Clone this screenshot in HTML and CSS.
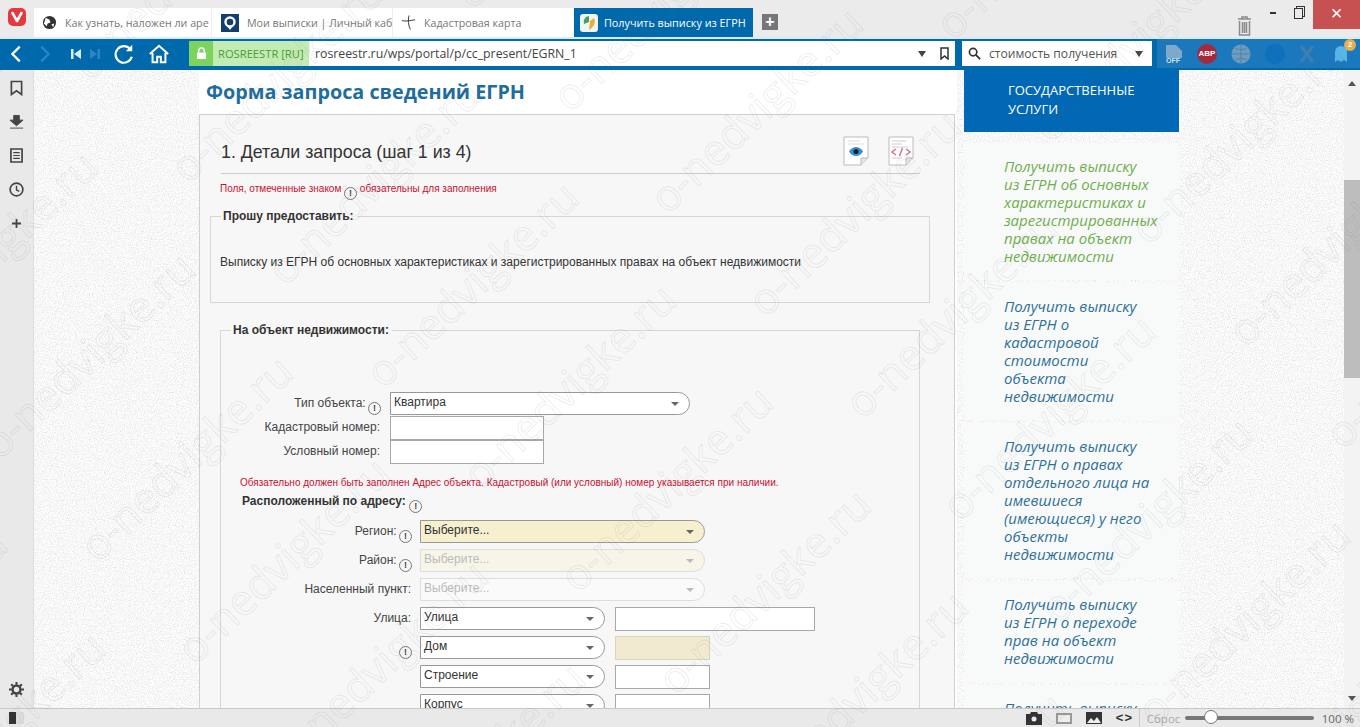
FILE: index.html
```html
<!DOCTYPE html>
<html lang="ru">
<head>
<meta charset="utf-8">
<title>Получить выписку из ЕГРН</title>
<link rel="stylesheet" href="styles.css">
</head>
<body>
<header class="tabbar">
  <div class="logo"><svg viewBox="0 0 18 18" width="18" height="18"><rect width="18" height="18" rx="5" fill="#e5383f"/><path d="M4.5 5l4.5 8 4.5-8" fill="none" stroke="#fff" stroke-width="2.6" stroke-linecap="round" stroke-linejoin="round"/></svg></div>
  <div class="tab tab-one"><svg viewBox="0 0 16 16" width="15" height="15"><circle cx="8" cy="8" r="7" fill="#333"/><path d="M4 3l4 2 1 3-3 1-1 3-3-3zM10 10l3-1-1 4z" fill="#fff"/></svg><span class="tab-text">Как узнать, наложен ли аре</span></div>
  <div class="tab tab-two"><svg viewBox="0 0 18 18" width="18" height="18"><rect width="18" height="18" fill="#123f6d"/><circle cx="9" cy="8" r="4.5" fill="none" stroke="#fff" stroke-width="2.4"/><path d="M6 12l3 4 3-4z" fill="#fff"/></svg><span class="tab-text">Мои выписки | Личный каб</span></div>
  <div class="tab tab-three"><svg viewBox="0 0 16 18" width="15" height="18"><path d="M1 6.500c4 1 9 0 14-1M8.500 1c-1 5-1 10 1.500 15" fill="none" stroke="#333" stroke-width="1"/></svg><span class="tab-text">Кадастровая карта</span></div>
  <div class="tab tab-active"><svg viewBox="0 0 18 18" width="18" height="18"><rect width="18" height="18" rx="3" fill="#eef5f2"/><path d="M9 2a6 6 0 0 0-5 8l5-2z" fill="#4a9d5b"/><path d="M10 7l4-3c2 4 0 9-5 12z" fill="#e4b23a"/></svg><span>Получить выписку из ЕГРН</span></div>
  <div class="new-tab">+</div>
  <div class="window-tools">
    <svg class="trash" viewBox="0 0 15 22" width="15" height="22"><path d="M1 4h13M5 4V2h5v2M2.500 6v14h10V6M5.500 7v11M7.500 7v11M9.500 7v11" fill="none" stroke="#8a8a8a" stroke-width="1.500"/></svg>
    <span class="win-min"></span>
    <span class="win-max"></span>
    <span class="win-close">×</span>
  </div>
</header>

<nav class="addressbar">
  <div class="nav-icons">
    <svg viewBox="0 0 24 24" width="22" height="24"><path d="M15 4l-8 8 8 8" fill="none" stroke="#fff" stroke-width="2.500"/></svg>
    <svg viewBox="0 0 24 24" width="22" height="24"><path d="M9 4l8 8-8 8" fill="none" stroke="#2b86c8" stroke-width="2.500"/></svg>
    <svg class="skip" viewBox="0 0 14 14" width="14" height="14"><path d="M2 2h2.500v10H2zM12 2v10L5 7z" fill="#dcecf7"/></svg>
    <svg viewBox="0 0 14 14" width="14" height="14"><path d="M12 2h-2.500v10H12zM2 2v10l7-5z" fill="#2b86c8"/></svg>
    <svg class="reload" viewBox="0 0 24 24" width="22" height="22"><path d="M19 7A9 9 0 1 0 20.500 15" fill="none" stroke="#fff" stroke-width="2.400"/><path d="M21 2v7h-7z" fill="#fff"/></svg>
    <svg viewBox="0 0 24 24" width="22" height="22"><path d="M2 12L12 3l10 9M5 11v10h5v-6h4v6h5V11" fill="none" stroke="#fff" stroke-width="2.200"/></svg>
  </div>
  <div class="urlfield">
    <div class="site-badge"><span class="lock"><svg viewBox="0 0 12 14" width="11" height="13"><path d="M3 6V4a3 3 0 0 1 6 0v2" fill="none" stroke="#fff" stroke-width="1.500"/><rect x="1" y="6" width="10" height="7" fill="#fff"/></svg></span><span>ROSREESTR [RU]</span></div>
    <span class="url">rosreestr.ru/wps/portal/p/cc_present/EGRN_1</span>
    <span class="arrow-down"></span>
    <svg class="mark" viewBox="0 0 9 13" width="9" height="13"><path d="M1 1h7v11L4.500 9 1 12z" fill="none" stroke="#333" stroke-width="1.500"/></svg>
  </div>
  <div class="searchfield">
    <svg viewBox="0 0 14 14" width="13" height="13"><circle cx="5.500" cy="5.500" r="4" fill="none" stroke="#333" stroke-width="1.800"/><path d="M8.500 8.500L13 13" stroke="#333" stroke-width="2"/></svg>
    <span class="query">стоимость получения</span>
    <span class="arrow-down"></span>
  </div>
  <div class="ext-icons">
    <svg viewBox="0 0 18 20" width="18" height="20"><path d="M1 1h10l6 6v7H1z" fill="#7fa9c9"/><text x="1" y="19" class="ext-off">OFF</text></svg>
    <span class="abp">ABP</span>
    <svg viewBox="0 0 20 20" width="20" height="20"><circle cx="10" cy="10" r="9.500" fill="#6f9cbc"/><path d="M1 10h18M10 1v18M4 4c4 2 8 2 12 0M4 16c4-2 8-2 12 0" stroke="#4b83ab" fill="none"/></svg>
    <span class="ext-blue"></span>
    <svg viewBox="0 0 16 18" width="16" height="18"><path d="M2 1l12 16M14 1L2 17" stroke="#3f7fb0" stroke-width="3"/></svg>
    <span class="ghost"><svg viewBox="0 0 14 18" width="14" height="18"><path d="M1 17V7a6 6 0 0 1 12 0v10l-3-2-3 2-3-2z" fill="#58b6e6"/></svg><b class="ghost-badge">2</b></span>
  </div>
</nav>

<div class="workspace">
  <aside class="sidepanel">
    <svg viewBox="0 0 14 16" width="13" height="16"><path d="M1.500 1h11v14L7 11l-5.500 4z" fill="none" stroke="#444" stroke-width="1.800"/></svg>
    <svg viewBox="0 0 16 16" width="15" height="16"><path d="M5 1h6v5h4l-7 6-7-6h4zM1 14.500h14" fill="#444" stroke="#444"/></svg>
    <svg viewBox="0 0 14 16" width="13" height="15"><path d="M1 1h12v14H1z" fill="none" stroke="#444" stroke-width="1.800"/><path d="M3.500 5h7M3.500 8h7M3.500 11h7" stroke="#444" stroke-width="1.300"/></svg>
    <svg class="clock" viewBox="0 0 16 16" width="15" height="15"><circle cx="8" cy="8" r="6.800" fill="none" stroke="#444" stroke-width="1.800"/><path d="M8 4v4.500l3 1.500" fill="none" stroke="#444" stroke-width="1.500"/></svg>
    <svg class="plus" viewBox="0 0 10 10" width="9" height="9"><path d="M5 0v10M0 5h10" stroke="#444" stroke-width="2"/></svg>
    <svg class="gear" viewBox="0 0 16 16" width="15" height="15"><circle cx="8" cy="8" r="4.200" fill="none" stroke="#444" stroke-width="2.600"/><path d="M8 0v3M8 13v3M0 8h3M13 8h3M2.300 2.300l2.200 2.200M11.500 11.500l2.200 2.200M13.700 2.300l-2.200 2.200M4.500 11.500l-2.200 2.200" stroke="#444" stroke-width="2.200"/></svg>
  </aside>

  <main class="page">
    <svg class="speckle" aria-hidden="true"><filter id="grain"><feTurbulence type="fractalNoise" baseFrequency="0.85" numOctaves="2"/><feColorMatrix values="0 0 0 0 0.6  0 0 0 0 0.6  0 0 0 0 0.6  1.300 0 0 0 -0.55"/></filter><rect width="100%" height="100%" filter="url(#grain)"/></svg>
    <div class="column">
      <h1 class="heading">Форма запроса сведений ЕГРН</h1>
      <section class="panel">
        <div class="step-head">
          <h2>1. Детали запроса (шаг 1 из 4)</h2>
          <div class="doc-icons">
            <svg viewBox="0 0 26 30" width="26" height="30"><path d="M1 1h24v21l-7 7H1z" fill="#fff" stroke="#bbb"/><path d="M18 29v-7h7" fill="#e6e6e6" stroke="#bbb"/><path d="M5 5h12M5 8h16" stroke="#ddd"/><path d="M6 15.500c3.500-6 10.500-6 14 0-3.500 6-10.500 6-14 0z" fill="#3d8dcb"/><circle cx="13" cy="15.500" r="2.500" fill="#123"/></svg>
            <svg viewBox="0 0 26 30" width="26" height="30"><path d="M1 1h24v21l-7 7H1z" fill="#fff" stroke="#bbb"/><path d="M18 29v-7h7" fill="#e6e6e6" stroke="#bbb"/><path d="M4 5h14M4 8h10M4 11h16M4 22h10" stroke="#ccc"/><path d="M8 13l-4 3 4 3M18 13l4 3-4 3M14.500 12l-3 8" fill="none" stroke="#c77a8c" stroke-width="1.500"/></svg>
          </div>
        </div>
        <p class="note note-top">Поля, отмеченные знаком <i class="req">!</i> обязательны для заполнения</p>
        <fieldset class="box box-request">
          <legend>Прошу предоставить:</legend>
          <p class="request-text">Выписку из ЕГРН об основных характеристиках и зарегистрированных правах на объект недвижимости</p>
        </fieldset>
        <fieldset class="box box-object">
          <legend>На объект недвижимости:</legend>
          <div class="rows rows-object">
            <div class="row"><label class="lbl">Тип объекта: <i class="req">!</i></label><div class="select w300">Квартира</div></div>
            <div class="row"><label class="lbl">Кадастровый номер:</label><div class="input w154"></div></div>
            <div class="row"><label class="lbl">Условный номер:</label><div class="input w154"></div></div>
          </div>
          <p class="note note-address">Обязательно должен быть заполнен Адрес объекта. Кадастровый (или условный) номер указывается при наличии.</p>
          <h3 class="addr-title">Расположенный по адресу: <i class="req">!</i></h3>
          <div class="rows rows-address">
            <div class="row"><label class="lbl">Регион: <i class="req">!</i></label><div class="select w285 yellow">Выберите...</div></div>
            <div class="row"><label class="lbl">Район: <i class="req">!</i></label><div class="select w285 yellow off">Выберите...</div></div>
            <div class="row"><label class="lbl">Населенный пункт:</label><div class="select w285 off">Выберите...</div></div>
            <div class="row"><label class="lbl">Улица:</label><div class="select w185">Улица</div><div class="input w200"></div></div>
            <div class="row"><label class="lbl"><i class="req">!</i></label><div class="select w185">Дом</div><div class="input w95 beige"></div></div>
            <div class="row"><label class="lbl"></label><div class="select w185">Строение</div><div class="input w95"></div></div>
            <div class="row"><label class="lbl"></label><div class="select w185">Корпус</div><div class="input w95"></div></div>
          </div>
        </fieldset>
      </section>
    </div>
    <aside class="services">
      <div class="services-title">ГОСУДАРСТВЕННЫЕ<br>УСЛУГИ</div>
      <ul class="service-list">
        <li class="current">Получить выписку<br>из ЕГРН об основных<br>характеристиках и<br>зарегистрированных<br>правах на объект<br>недвижимости</li>
        <li>Получить выписку<br>из ЕГРН о<br>кадастровой<br>стоимости<br>объекта<br>недвижимости</li>
        <li>Получить выписку<br>из ЕГРН о правах<br>отдельного лица на<br>имевшиеся<br>(имеющиеся) у него<br>объекты<br>недвижимости</li>
        <li>Получить выписку<br>из ЕГРН о переходе<br>прав на объект<br>недвижимости</li>
        <li>Получить выписку</li>
      </ul>
    </aside>
    <div class="scrollbar"><span class="sb-up"></span><span class="sb-thumb"></span><span class="sb-down"></span></div>
  </main>
</div>

<footer class="statusbar">
  <span class="panel-toggle"></span>
  <div class="status-right">
    <svg viewBox="0 0 16 13" width="16" height="13"><path d="M0 2h4l1-2h6l1 2h4v11H0z" fill="#333"/><circle cx="8" cy="7" r="2.500" fill="#eee"/></svg>
    <span class="status-rect"></span>
    <svg viewBox="0 0 16 12" width="16" height="12"><path d="M0 0h16v12H0z" fill="#333"/><path d="M1 11l4-5 3 3 3-4 4 6z" fill="#eee"/></svg>
    <span class="status-code">&lt;&#8202;&gt;</span>
    <span class="status-sep"></span>
    <span class="reset">Сброс</span>
    <span class="slider"><span class="slider-knob"></span></span>
    <span class="zoom">100 %</span>
  </div>
</footer>

<div class="watermark" aria-hidden="true">
  <div class="wm-plane">
    <div class="wm-row"><span>o-nedvigke.ru</span><span>o-nedvigke.ru</span><span>o-nedvigke.ru</span><span>o-nedvigke.ru</span></div>
    <div class="wm-row odd"><span>o-nedvigke.ru</span><span>o-nedvigke.ru</span><span>o-nedvigke.ru</span><span>o-nedvigke.ru</span></div>
    <div class="wm-row"><span>o-nedvigke.ru</span><span>o-nedvigke.ru</span><span>o-nedvigke.ru</span><span>o-nedvigke.ru</span></div>
    <div class="wm-row odd"><span>o-nedvigke.ru</span><span>o-nedvigke.ru</span><span>o-nedvigke.ru</span><span>o-nedvigke.ru</span></div>
    <div class="wm-row"><span>o-nedvigke.ru</span><span>o-nedvigke.ru</span><span>o-nedvigke.ru</span><span>o-nedvigke.ru</span></div>
    <div class="wm-row odd"><span>o-nedvigke.ru</span><span>o-nedvigke.ru</span><span>o-nedvigke.ru</span><span>o-nedvigke.ru</span></div>
    <div class="wm-row"><span>o-nedvigke.ru</span><span>o-nedvigke.ru</span><span>o-nedvigke.ru</span><span>o-nedvigke.ru</span></div>
    <div class="wm-row odd"><span>o-nedvigke.ru</span><span>o-nedvigke.ru</span><span>o-nedvigke.ru</span><span>o-nedvigke.ru</span></div>
    <div class="wm-row"><span>o-nedvigke.ru</span><span>o-nedvigke.ru</span><span>o-nedvigke.ru</span><span>o-nedvigke.ru</span></div>
    <div class="wm-row odd"><span>o-nedvigke.ru</span><span>o-nedvigke.ru</span><span>o-nedvigke.ru</span><span>o-nedvigke.ru</span></div>
    <div class="wm-row"><span>o-nedvigke.ru</span><span>o-nedvigke.ru</span><span>o-nedvigke.ru</span><span>o-nedvigke.ru</span></div>
    <div class="wm-row odd"><span>o-nedvigke.ru</span><span>o-nedvigke.ru</span><span>o-nedvigke.ru</span><span>o-nedvigke.ru</span></div>
    <div class="wm-row"><span>o-nedvigke.ru</span><span>o-nedvigke.ru</span><span>o-nedvigke.ru</span><span>o-nedvigke.ru</span></div>
    <div class="wm-row odd"><span>o-nedvigke.ru</span><span>o-nedvigke.ru</span><span>o-nedvigke.ru</span><span>o-nedvigke.ru</span></div>
    <div class="wm-row"><span>o-nedvigke.ru</span><span>o-nedvigke.ru</span><span>o-nedvigke.ru</span><span>o-nedvigke.ru</span></div>
    <div class="wm-row odd"><span>o-nedvigke.ru</span><span>o-nedvigke.ru</span><span>o-nedvigke.ru</span><span>o-nedvigke.ru</span></div>
    <div class="wm-row"><span>o-nedvigke.ru</span><span>o-nedvigke.ru</span><span>o-nedvigke.ru</span><span>o-nedvigke.ru</span></div>
    <div class="wm-row odd"><span>o-nedvigke.ru</span><span>o-nedvigke.ru</span><span>o-nedvigke.ru</span><span>o-nedvigke.ru</span></div>
    <div class="wm-row"><span>o-nedvigke.ru</span><span>o-nedvigke.ru</span><span>o-nedvigke.ru</span><span>o-nedvigke.ru</span></div>
    <div class="wm-row odd"><span>o-nedvigke.ru</span><span>o-nedvigke.ru</span><span>o-nedvigke.ru</span><span>o-nedvigke.ru</span></div>
    <div class="wm-row"><span>o-nedvigke.ru</span><span>o-nedvigke.ru</span><span>o-nedvigke.ru</span><span>o-nedvigke.ru</span></div>
    <div class="wm-row odd"><span>o-nedvigke.ru</span><span>o-nedvigke.ru</span><span>o-nedvigke.ru</span><span>o-nedvigke.ru</span></div>
  </div>
</div>
</body>
</html>
```
FILE: styles.css
```css
* { box-sizing: border-box; }
html, body { margin: 0; height: 100%; overflow: hidden; }
body {
  position: relative;
  display: flex;
  flex-direction: column;
  width: 1360px;
  height: 727px;
  font-family: "Liberation Sans", Arial, sans-serif;
  background: #fff;
  color: #333;
}

/* Tab bar */
.tabbar {
  height: 37px;
  flex: none;
  display: flex;
  align-items: flex-end;
  background: #ebebeb;
  font-family: "Open Sans", "Noto Sans", sans-serif;
  font-size: 10.7px;
}
.logo { width: 34px; height: 37px; padding: 8px 0 0 8px; }
.tab {
  height: 29px;
  display: flex;
  align-items: center;
  gap: 8px;
  padding-left: 8px;
  background: #fff;
  color: #777;
  white-space: nowrap;
}
.tab svg { flex: none; }
.tab-text { flex: 1; }
.tab-one { width: 178px; border-right: 1px solid #eee; }
.tab-two { width: 181px; border-right: 1px solid #eee; padding-left: 9px; }
.tab-three { width: 181px; gap: 8px; }
.tab-active { width: 179px; background: #0069ac; color: #fff; padding-left: 6px; gap: 6px; }
.tab-active span { font-size: 10.8px; }
.new-tab {
  width: 16px;
  height: 16px;
  margin: 0 0 7px 9px;
  background: #777;
  color: #fff;
  font: bold 16px/15px "Liberation Sans", sans-serif;
  text-align: center;
}
.window-tools { position: relative; flex: 1; height: 37px; }
.trash { position: absolute; left: 459px; top: 15px; }
.win-min { position: absolute; left: 492px; top: 12px; width: 6px; height: 2px; background: #333; }
.win-max { position: absolute; left: 516px; top: 8px; width: 9px; height: 11px; border: 1px solid #333; background: #ebebeb; box-shadow: 2px -2px 0 -1px #ebebeb, 2px -2px 0 0 #333; }
.win-close { position: absolute; right: 0; top: 0; width: 47px; height: 29px; background: #c75050; color: #fff; font: 20px/26px "Liberation Sans", sans-serif; text-align: center; }

/* Address bar */
.addressbar {
  height: 33px;
  flex: none;
  display: flex;
  align-items: center;
  background: #0069ac;
  border-top: 2px solid #d8ecf7;
  border-bottom: 2px solid #0069ac;
}
.nav-icons { width: 189px; display: flex; align-items: center; padding-left: 6px; gap: 5px; }
.nav-icons .skip { margin-left: 9px; }
.nav-icons .reload { margin-left: 6px; margin-right: 8px; }
.urlfield {
  width: 766px;
  height: 25px;
  display: flex;
  align-items: center;
  background: #fff;
  font-family: "Open Sans", "Noto Sans", sans-serif;
  font-size: 12.3px;
  color: #444;
}
.site-badge {
  width: 120px;
  height: 25px;
  display: flex;
  align-items: center;
  gap: 5px;
  background: #c3ecb4;
  color: #4e9a3a;
  font-size: 11.2px;
  white-space: nowrap;
}
.lock { width: 24px; height: 25px; display: flex; align-items: center; justify-content: center; background: #7ed35f; }
.url { margin-left: 6px; flex: 1; white-space: nowrap; }
.arrow-down { width: 0; height: 0; border: 4px solid transparent; border-top: 6px solid #444; border-bottom: 0; }
.mark { margin: 0 6px 0 14px; }
.searchfield {
  width: 190px;
  height: 25px;
  margin-left: 7px;
  display: flex;
  align-items: center;
  padding: 0 9px 0 6px;
  gap: 3px;
  background: #fff;
  font-family: "Open Sans", "Noto Sans", sans-serif;
  font-size: 12.1px;
  color: #555;
}
.query { flex: 1; white-space: nowrap; margin-left: 5px; }
.ext-icons {
  flex: 1;
  height: 29px;
  margin-left: 5px;
  display: flex;
  align-items: center;
  gap: 14px;
  padding-left: 8px;
  background: #1c78bc;
}
.ext-off { font: bold 7px "Liberation Sans", sans-serif; fill: #cfe2ee; }
.abp {
  width: 20px;
  height: 20px;
  border-radius: 50%;
  background: #a8283c;
  color: #fff;
  font: bold 8px/20px "Liberation Sans", sans-serif;
  text-align: center;
}
.ext-blue { width: 20px; height: 20px; border-radius: 50%; background: #0f70bb; }
.ghost { position: relative; display: flex; margin-left: 5px; }
.ghost-badge {
  position: absolute;
  left: 10px;
  top: -6px;
  width: 12px;
  height: 12px;
  border-radius: 50%;
  background: #e0b050;
  color: #fff;
  font: bold 8px/12px "Liberation Sans", sans-serif;
  text-align: center;
}

/* Workspace */
.workspace { flex: 1; min-height: 0; display: flex; }
.sidepanel {
  position: relative;
  width: 34px;
  flex: none;
  display: flex;
  flex-direction: column;
  align-items: center;
  gap: 18px;
  padding-top: 10px;
  background: #e9e9e9;
  border-right: 1px solid #ddd;
}
.clock { margin-top: 1px; }
.plus { margin-top: 4px; }
.gear { position: absolute; left: 9px; top: 612px; }

.page {
  position: relative;
  flex: 1;
  min-width: 0;
  display: flex;
  gap: 7px;
  padding-left: 165px;
  background: #fdfdfd;
  overflow: hidden;
}
.speckle { position: absolute; inset: 0; width: 100%; height: 100%; }
.column { position: relative; width: 758px; flex: none; background: #fff; }
.heading {
  margin: 0;
  height: 44px;
  padding: 5px 0 0 7px;
  font: 700 19.8px/34px "Open Sans", "Noto Sans", sans-serif;
  color: #1e6d9f;
}
.panel {
  width: 756px;
  height: 640px;
  padding: 21px 24px 0 10px;
  background: #f7f7f7;
  border: 1px solid #cfcfcf;
}
.step-head {
  position: relative;
  height: 38px;
  margin: 0 10px 0 11px;
  padding-top: 4px;
  border-bottom: 1px solid #ccc;
}
.step-head h2 { margin: 0; font-size: 17.8px; font-weight: 400; line-height: 24px; color: #333; }
.doc-icons { position: absolute; right: 6px; top: 0; display: flex; gap: 19px; }
.note { margin: 0; font-size: 10px; color: #c8102e; white-space: nowrap; }
.note-top { margin: 8px 0 0 10px; line-height: 14px; }
.req {
  display: inline-block;
  width: 13px;
  height: 13px;
  border: 1px solid #777;
  border-radius: 50%;
  font: bold 9px/11px "Liberation Sans", sans-serif;
  color: #444;
  text-align: center;
  vertical-align: -4px;
}
.lbl .req { margin-right: -1px; margin-left: -1px; }
.box {
  margin: 0;
  padding: 0;
  border: 1px solid #d6d6d6;
  min-width: 0;
}
.box legend {
  padding: 0 3px 0 2px;
  margin-left: 10px;
  font-size: 12px;
  font-weight: 700;
  line-height: 14px;
  color: #333;
}
.box-request { height: 94px; margin-top: 9px; }
.request-text { margin: 32px 0 0 9px; font-size: 12px; line-height: 14px; color: #333; }
.box-object { margin: 20px 0 0 10px; width: 700px; height: 420px; }
.rows { display: flex; flex-direction: column; }
.row { display: flex; align-items: flex-start; }
.rows-object { margin-top: 55px; }
.rows-object .row { height: 24px; }
.rows-address { gap: 6px; margin-top: 7px; }
.rows-address .row { height: 23px; }
.lbl {
  flex: none;
  font-size: 12px;
  line-height: 23px;
  text-align: right;
  color: #444;
  white-space: nowrap;
}
.rows-object .lbl { width: 159px; margin-right: 10px; }
.rows-address .lbl { width: 190px; margin-right: 9px; }
.select {
  position: relative;
  height: 23px;
  padding-left: 3px;
  border: 1px solid #999;
  border-radius: 0 12px 12px 0;
  background: #fff;
  font-size: 12px;
  line-height: 19px;
  color: #333;
}
.select::after {
  content: "";
  position: absolute;
  right: 10px;
  top: 9px;
  border: 4px solid transparent;
  border-top: 4px solid #666;
  border-bottom: 0;
}
.select.yellow { background: #f6f0cf; }
.select.off { border-color: #ddd; color: #bbb; background: #fafafa; }
.select.off.yellow { background: #f7f5e8; }
.select.off::after { border-top-color: #bbb; }
.input { height: 24px; border: 1px solid #a8a8a8; background: #fff; }
.input.beige { background: #f1ead0; border-color: #d8d4b8; }
.w300 { width: 300px; }
.w285 { width: 285px; }
.w185 { width: 185px; }
.w154 { width: 154px; }
.w200 { width: 200px; margin-left: 10px; }
.w95 { width: 95px; margin-left: 10px; }
.note-address { margin: 12px 0 0 19px; line-height: 14px; }
.addr-title { margin: 3px 0 0 21px; font-size: 12px; font-weight: 700; line-height: 16px; color: #333; }

/* Services */
.services { position: relative; width: 215px; flex: none; }
.services-title {
  height: 62px;
  padding: 11px 0 0 44px;
  background: #0068b4;
  color: #fff;
  font: 500 13px/19px "Open Sans", "Noto Sans", sans-serif;
}
.service-list { list-style: none; margin: 11px 0 0; padding: 0; display: flex; flex-direction: column; gap: 3px; }
.service-list li {
  padding: 14px 6px 15px 40px;
  background: #f8fafa;
  font: italic 15px/18px "Open Sans", "Noto Sans", sans-serif;
  color: #2f7097;
  white-space: nowrap;
}
.service-list li.current { color: #6fae4c; }

.scrollbar {
  position: absolute;
  right: 0;
  top: 0;
  bottom: 0;
  width: 16px;
  background: #f3f3f3;
  display: flex;
  flex-direction: column;
  align-items: center;
}
.sb-up { margin-top: 11px; border: 4px solid transparent; border-bottom: 5px solid #555; border-top: 0; }
.sb-thumb { width: 100%; height: 198px; margin-top: 94px; background: #bdbdbd; }
.sb-down { margin-top: auto; margin-bottom: 7px; border: 4px solid transparent; border-top: 5px solid #555; border-bottom: 0; }

/* Status bar */
.statusbar {
  position: relative;
  height: 19px;
  flex: none;
  display: flex;
  align-items: center;
  justify-content: space-between;
  padding: 0 6px 0 9px;
  background: #e9e9e9;
  border-top: 1px solid #c8c8c8;
  font-family: "Open Sans", "Noto Sans", sans-serif;
  font-size: 11.5px;
}
.panel-toggle { width: 15px; height: 12px; background: #333; border-left: 6px solid #333; box-shadow: inset -8px 0 0 #ddd; }
.status-right { display: flex; align-items: center; }
.status-right svg:first-child { margin-right: 14px; }
.status-rect { width: 16px; height: 11px; border: 2px solid #999; background: #eee; margin-right: 14px; }
.status-code { width: 16px; margin-left: 14px; font: bold 13px/16px "Liberation Sans", sans-serif; color: #333; white-space: nowrap; }
.status-sep { width: 1px; height: 18px; background: #ccc; margin: 0 7px; }
.reset { color: #aaa; width: 38px; }
.slider { position: relative; width: 129px; height: 4px; background: #777; border-radius: 2px; }
.slider-knob { position: absolute; left: 19px; top: -6px; width: 14px; height: 14px; border: 1px solid #777; border-radius: 50%; background: #fff; }
.zoom { margin-left: 8px; color: #666; }

/* Watermark: a staggered diagonal tile over the whole window */
.watermark { position: absolute; inset: 0; overflow: hidden; pointer-events: none; }
.wm-plane {
  position: absolute;
  left: -752px;
  top: 619px;
  transform: rotate(-43.6deg);
  transform-origin: 0 0;
  font: 400 43px/70.7px "Open Sans", "Noto Sans", sans-serif;
  color: transparent;
  -webkit-text-stroke: 1px rgba(110, 110, 110, .13);
  white-space: nowrap;
}
.wm-row { display: flex; height: 70.7px; margin-left: 327px; }
.wm-row span { flex: 0 0 653px; }
.wm-row.odd { margin-left: 0; }
```
